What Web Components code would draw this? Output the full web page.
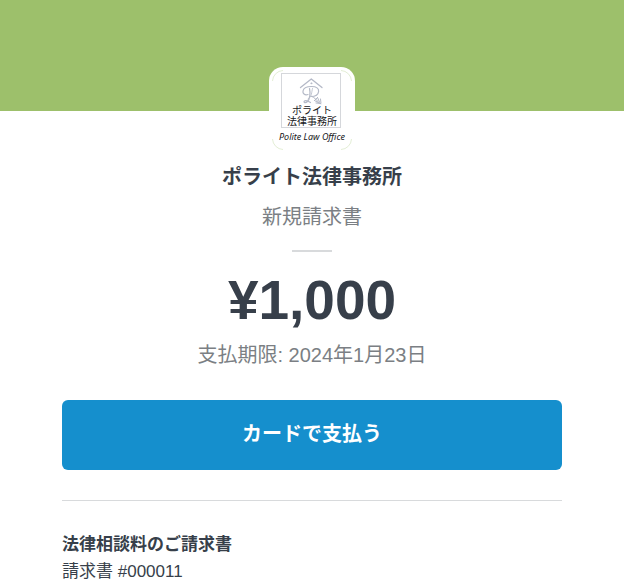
<!DOCTYPE html>
<html lang="ja">
<head>
<meta charset="utf-8">
<meta name="viewport" content="width=device-width, initial-scale=1">
<title>ポライト法律事務所 新規請求書</title>
<style>
  body {
    margin: 0;
    background: #fff;
    color: #373f4a;
    font-family: "Liberation Sans", "Noto Sans CJK JP", sans-serif;
    font-size: 20px;
    line-height: 30px;
    --brand: #9dc06b;
    --accent: #158fcd;
    --muted: #7b7f84;
    --rule: #d8dadc;
  }
</style>
</head>
<body>
<invoice-page>
  <merchant-header slot="header">
    <merchant-logo slot="logo"></merchant-logo>
    <span slot="name">ポライト法律事務所</span>
    <span slot="kind">新規請求書</span>
  </merchant-header>
  <amount-due slot="amount">
    <span slot="value">¥1,000</span>
    <span slot="due">支払期限: 2024年1月23日</span>
  </amount-due>
  <pay-button slot="action">カードで支払う</pay-button>
  <invoice-summary slot="summary">
    <span slot="title">法律相談料のご請求書</span>
    <span slot="number">請求書 #000011</span>
  </invoice-summary>
</invoice-page>

<script>
function define(name, html) {
  const template = document.createElement('template');
  template.innerHTML = html;
  customElements.define(name, class extends HTMLElement {
    constructor() {
      super();
      this.attachShadow({ mode: 'open' }).append(template.content.cloneNode(true));
    }
  });
}

define('invoice-page', `
  <style>
    :host { display: block; }
    main { display: flex; flex-direction: column; }
    .body { box-sizing: border-box; width: 100%; max-width: 532px; margin: 0 auto; padding: 0 16px; }
  </style>
  <main>
    <slot name="header"></slot>
    <slot name="amount"></slot>
    <div class="body">
      <slot name="action"></slot>
      <slot name="summary"></slot>
    </div>
  </main>`);

define('merchant-header', `
  <style>
    :host {
      display: flex; flex-direction: column; align-items: center;
      padding-top: 67px; text-align: center;
      background: linear-gradient(var(--brand) 111px, transparent 111px);
    }
    h1 { margin: 9px 0 10px; font-size: 20px; line-height: 30px; font-weight: 700; }
    p { margin: 0; color: var(--muted); }
    hr { width: 40px; height: 2px; margin: 18px 0 0; border: 0; background: var(--rule); }
  </style>
  <slot name="logo"></slot>
  <h1><slot name="name"></slot></h1>
  <p><slot name="kind"></slot></p>
  <hr>`);

define('merchant-logo', `
  <style>
    :host { display: block; padding: 3px; border-radius: 14px; background: #fff; }
    svg { display: block; width: 80px; height: 80px; }
    text { font-family: "Liberation Sans", "Noto Sans CJK JP", sans-serif; text-anchor: middle; fill: #17181b; }
    .script { font-family: "Noto Sans", sans-serif; font-style: italic; }
  </style>
  <svg viewBox="0 0 80 80" role="img" aria-label="Polite Law Office">
    <g fill="none" stroke="#e3eed5">
      <path d="M.5 11A11 11 0 0 1 11 .5M69 .5A11 11 0 0 1 79.500 11"/>
      <path d="M.5 69A11 11 0 0 0 11 79.500M69 79.500A11 11 0 0 0 79.500 69"/>
    </g>
    <rect x="9.500" y="3.500" width="59" height="54" fill="none" stroke="#d5d7db"/>
    <g fill="none" stroke="#b4b9c7" stroke-linecap="round" stroke-linejoin="round">
      <path d="M28.500 17.500 39.300 9 50 17.500" stroke-width="1.300"/>
      <circle cx="39.300" cy="13.300" r=".5"/>
      <path d="M36 24.500C32.500 25.500 30.500 23.500 31 21C31.500 18 35 16.500 39.500 16.500C44.500 16.500 47 18.500 46.600 21.500C46.200 25 42.500 26.500 39 26.500" stroke-width="1.200"/>
      <path d="M37.500 18.500C38.500 22.500 38 29 35.500 31.500C33.500 33.500 31 32.500 32.500 31C34 29.800 37 31.500 38.500 32.500" stroke-width="1.200"/>
      <path d="M40.500 18.500C39.500 22 40 27 36 29" stroke-width=".8"/>
      <path d="M40 26.500C42.500 27.500 44.500 30 48.500 34M42.500 30.500 47 33M45.500 27.500 47.500 32M42.500 30.500 45.500 27.500M44 33 49 33.500 48.500 29" stroke-width="1"/>
    </g>
    <text x="40" y="44" font-size="10">ポライト</text>
    <text x="40" y="55" font-size="10">法律事務所</text>
    <text class="script" x="40" y="70" font-size="9">Polite Law Office</text>
  </svg>`);

define('amount-due', `
  <style>
    :host { display: block; text-align: center; }
    .value { margin: 15px 0 7px; font-size: 55px; line-height: 66px; font-weight: 700; }
    .due { margin: 0; color: var(--muted); }
  </style>
  <p class="value"><slot name="value"></slot></p>
  <p class="due"><slot name="due"></slot></p>`);

define('pay-button', `
  <style>
    :host { display: block; margin-top: 30px; }
    button {
      display: block; width: 100%; padding: 19px 16px 21px; border: 0; border-radius: 6px;
      background: var(--accent); color: #fff; font: inherit; font-weight: 700; line-height: 30px; cursor: pointer;
    }
  </style>
  <button type="button"><slot></slot></button>`);

define('invoice-summary', `
  <style>
    :host { display: block; margin-top: 30px; padding-top: 30px; border-top: 1px solid var(--rule); }
    h2, p { margin: 0; font-size: 17px; line-height: 27px; }
    h2 { font-weight: 700; }
  </style>
  <h2><slot name="title"></slot></h2>
  <p><slot name="number"></slot></p>`);
</script>
</body>
</html>
